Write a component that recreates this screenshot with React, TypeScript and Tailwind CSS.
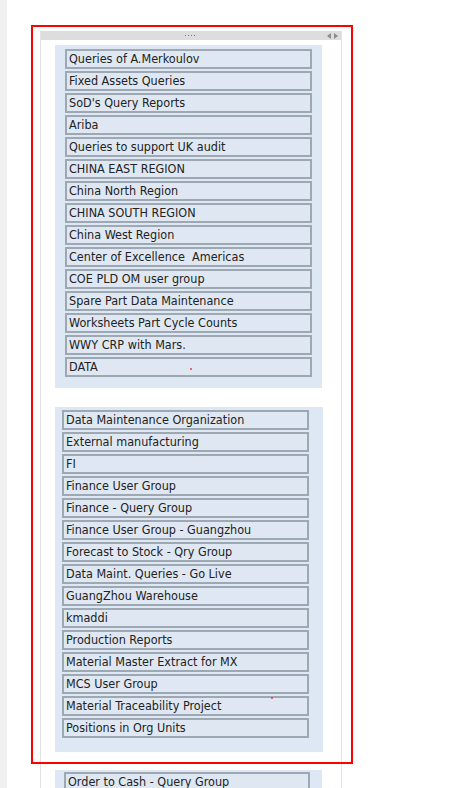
import React from "react";

const groupOne = [
  "Queries of A.Merkoulov",
  "Fixed Assets Queries",
  "SoD's Query Reports",
  "Ariba",
  "Queries to support UK audit",
  "CHINA EAST REGION",
  "China North Region",
  "CHINA SOUTH REGION",
  "China West Region",
  "Center of Excellence  Americas",
  "COE PLD OM user group",
  "Spare Part Data Maintenance",
  "Worksheets Part Cycle Counts",
  "WWY CRP with Mars.",
  "DATA",
];

const groupTwo = [
  "Data Maintenance Organization",
  "External manufacturing",
  "FI",
  "Finance User Group",
  "Finance - Query Group",
  "Finance User Group - Guangzhou",
  "Forecast to Stock - Qry Group",
  "Data Maint. Queries - Go Live",
  "GuangZhou Warehouse",
  "kmaddi",
  "Production Reports",
  "Material Master Extract for MX",
  "MCS User Group",
  "Material Traceability Project",
  "Positions in Org Units",
];

// stray red specks that sit in the screenshot
const marks: Record<string, string> = {
  DATA: "left-[123px] top-[9px]",
  "Material Traceability Project": "left-[207px] top-[-1px]",
};

const Item = ({ label }: { label: string }) => (
  <div className="relative h-[20px] shrink-0 border-2 border-[#9ea8b2] bg-[#dfe8f2] pl-[2px] text-[12.5px] leading-[16px] text-[#222] whitespace-pre">
    {label}
    {marks[label] && <span className={`absolute h-[2px] w-[2px] rounded-full bg-[#e04050] ${marks[label]}`} />}
  </div>
);

const App = () => {
  return (
    <div
      className="relative flex h-[788px] w-[452px] overflow-hidden bg-white"
      style={{ fontFamily: "'DejaVu Sans Condensed', 'DejaVu Sans', sans-serif" }}
    >
      <div className="w-[7px] shrink-0 bg-[#f0f0f0]" />
      <div className="flex flex-col">
        <div className="ml-[48px] h-[3px] shrink-0 overflow-hidden">
          <div className="-mt-[11px] text-[12px] leading-[14px] text-[#b0b0b0]">2019 Feb 13 08</div>
        </div>
        <div className="ml-[33px] mt-[28px] flex w-[302px] shrink-0 flex-col border-x border-[#e3e3e3]">
          <div className="flex h-[9px] items-center bg-[#dddddd]">
            <div className="flex flex-1 justify-center gap-[2px] pl-[12px]">
              <span className="h-[1px] w-[1px] bg-[#777]" />
              <span className="h-[1px] w-[1px] bg-[#777]" />
              <span className="h-[1px] w-[1px] bg-[#777]" />
              <span className="h-[1px] w-[1px] bg-[#777]" />
            </div>
            <div className="flex items-center gap-[3px] pr-[3px]">
              <svg width="4" height="6" viewBox="0 0 4 6"><path d="M4 0 L0 3 L4 6 Z" fill="#8c8c8c" /></svg>
              <svg width="4" height="6" viewBox="0 0 4 6"><path d="M0 0 L4 3 L0 6 Z" fill="#8c8c8c" /></svg>
            </div>
          </div>
          <div className="ml-[14px] mt-[5px] flex w-[267px] flex-col gap-[2px] bg-[#dde8f4] pb-[11px] pl-[10px] pr-[10px] pt-[4px]">
            {groupOne.map((g) => (
              <Item key={g} label={g} />
            ))}
          </div>
          <div className="ml-[14px] mt-[19px] flex w-[268px] flex-col gap-[2px] bg-[#dde8f4] pb-[14px] pl-[7px] pr-[14px] pt-[3px]">
            {groupTwo.map((g) => (
              <Item key={g} label={g} />
            ))}
          </div>
          <div className="ml-[14px] mt-[18px] flex w-[267px] flex-col gap-[2px] bg-[#dde8f4] pb-[14px] pl-[9px] pr-[12px] pt-[2px]">
            <Item label="Order to Cash - Query Group" />
          </div>
        </div>
      </div>
      <div className="pointer-events-none absolute left-[31px] top-[25px] h-[739px] w-[322px] border-2 border-[#ff0000]" />
    </div>
  );
};

export default App;
